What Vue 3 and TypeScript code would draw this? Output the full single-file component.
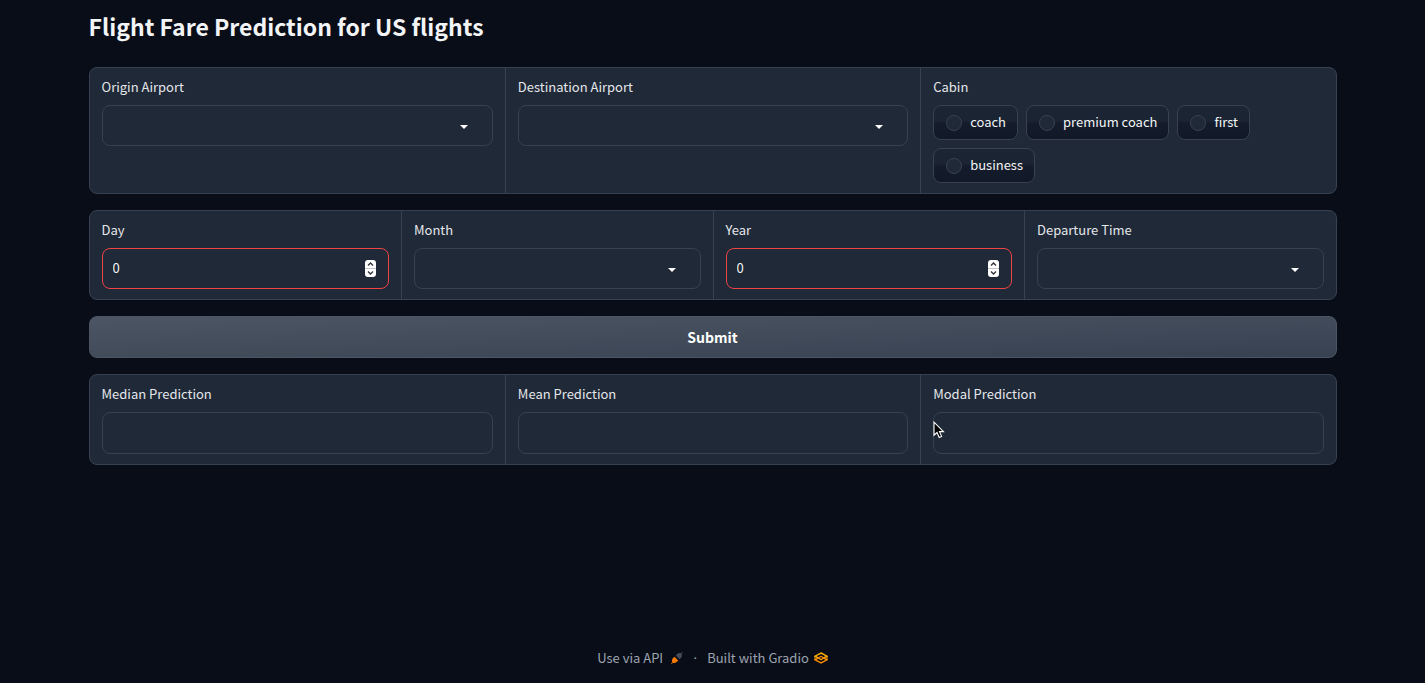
<script setup lang="ts">
import { ref } from 'vue'

const cabins: string[] = ['coach', 'premium coach', 'first', 'business']
const months: string[] = ['January', 'February', 'March', 'April', 'May', 'June', 'July', 'August', 'September', 'October', 'November', 'December']
const airports: string[] = ['ATL', 'BOS', 'CLT', 'DEN', 'DFW', 'JFK', 'LAX', 'MIA', 'ORD', 'SFO']
const times: string[] = ['Morning', 'Afternoon', 'Evening', 'Night']

const origin = ref('')
const destination = ref('')
const cabin = ref('')
const day = ref(0)
const month = ref('')
const year = ref(0)
const departure = ref('')
const median = ref('')
const mean = ref('')
const modal = ref('')
</script>

<template>
  <div class="page">
    <main>
      <h1>Flight Fare Prediction for US flights</h1>
      <form @submit.prevent>
        <div class="panel three">
          <div class="cell">
            <label class="title" for="origin">Origin Airport</label>
            <div class="field">
              <select id="origin" v-model="origin">
                <option v-for="a in airports" :key="a">{{ a }}</option>
              </select>
              <svg class="arrow" viewBox="0 0 8 4" aria-hidden="true"><path d="M0 0h8L4 4z" /></svg>
            </div>
          </div>
          <div class="cell">
            <label class="title" for="destination">Destination Airport</label>
            <div class="field">
              <select id="destination" v-model="destination">
                <option v-for="a in airports" :key="a">{{ a }}</option>
              </select>
              <svg class="arrow" viewBox="0 0 8 4" aria-hidden="true"><path d="M0 0h8L4 4z" /></svg>
            </div>
          </div>
          <fieldset class="cell">
            <legend class="title">Cabin</legend>
            <div class="choices">
              <label v-for="c in cabins" :key="c" class="choice">
                <input v-model="cabin" type="radio" name="cabin" :value="c" />
                <span>{{ c }}</span>
              </label>
            </div>
          </fieldset>
        </div>

        <div class="panel four">
          <div class="cell">
            <label class="title" for="day">Day</label>
            <div class="field">
              <input id="day" v-model="day" class="invalid" type="number" />
              <svg class="spinner" viewBox="0 0 11 17" aria-hidden="true">
                <rect width="11" height="17" rx="3" fill="#fff" />
                <path d="M0 8.5h11" stroke="#c4c6c9" />
                <path d="M3 5.5L5.500 3L8 5.500M3 11.500L5.500 14L8 11.500" fill="none" stroke="#30343b" stroke-width="1.400" />
              </svg>
            </div>
          </div>
          <div class="cell">
            <label class="title" for="month">Month</label>
            <div class="field">
              <select id="month" v-model="month">
                <option v-for="m in months" :key="m">{{ m }}</option>
              </select>
              <svg class="arrow" viewBox="0 0 8 4" aria-hidden="true"><path d="M0 0h8L4 4z" /></svg>
            </div>
          </div>
          <div class="cell">
            <label class="title" for="year">Year</label>
            <div class="field">
              <input id="year" v-model="year" class="invalid" type="number" />
              <svg class="spinner" viewBox="0 0 11 17" aria-hidden="true">
                <rect width="11" height="17" rx="3" fill="#fff" />
                <path d="M0 8.5h11" stroke="#c4c6c9" />
                <path d="M3 5.5L5.500 3L8 5.500M3 11.500L5.500 14L8 11.500" fill="none" stroke="#30343b" stroke-width="1.400" />
              </svg>
            </div>
          </div>
          <div class="cell">
            <label class="title" for="departure">Departure Time</label>
            <div class="field">
              <select id="departure" v-model="departure">
                <option v-for="t in times" :key="t">{{ t }}</option>
              </select>
              <svg class="arrow" viewBox="0 0 8 4" aria-hidden="true"><path d="M0 0h8L4 4z" /></svg>
            </div>
          </div>
        </div>

        <button class="submit" type="submit">Submit</button>

        <div class="panel three results">
          <div class="cell">
            <label class="title" for="median">Median Prediction</label>
            <div class="field"><input id="median" v-model="median" type="text" readonly /></div>
          </div>
          <div class="cell">
            <label class="title" for="mean">Mean Prediction</label>
            <div class="field"><input id="mean" v-model="mean" type="text" readonly /></div>
          </div>
          <div class="cell">
            <label class="title" for="modal">Modal Prediction</label>
            <div class="field">
              <input id="modal" v-model="modal" type="text" readonly />
              <svg class="pointer" viewBox="0 0 12 18" aria-hidden="true">
                <path d="M1 1.200V14.200L4 11.500L6.200 16.500L8.600 15.400L6.500 10.600H10.500Z" fill="#000" stroke="#fff" stroke-width="1.100" />
              </svg>
            </div>
          </div>
        </div>
      </form>
    </main>

    <footer>
      <a href="#api">
        Use via API
        <svg class="rocket" viewBox="0 0 12 12" aria-hidden="true">
          <path d="M0 11.600L1.400 10.200C.6 8.600 1 6.800 2.400 5.800L3.400 4.800L7.200 8.600L6.200 9.600C5 11 3.400 11.200 1.900 10.700L.6 12z" fill="#ff7c00" />
          <path d="M12 .4L10.600 1.800C11.400 3.400 11 5.200 9.600 6.200L8.600 7.200L4.800 3.400L5.800 2.400C7 1 8.600 .8 10.100 1.300L11.400 0z" fill="#414b5a" />
        </svg>
      </a>
      <span class="dot">·</span>
      <a href="#gradio">
        Built with Gradio
        <svg class="logo" viewBox="0 0 14 12" aria-hidden="true">
          <path d="M7 1L13 4.200L7 7.400L1 4.200z" fill="none" stroke="#ffb000" stroke-width="1.500" />
          <path d="M1 7.800L7 4.600L13 7.800L7 11z" fill="none" stroke="#ff8a00" stroke-width="1.500" />
          <path d="M1 4V8M13 4V8" stroke="#ffa000" stroke-width="1" />
          <path d="M5 6L7 5L9 6L7 7z" fill="#4a2c08" />
        </svg>
      </a>
    </footer>
  </div>
</template>

<style>
body {
  margin: 0;
  background: #090d18;
}
</style>

<style scoped>
.page {
  box-sizing: border-box;
  display: flex;
  flex-direction: column;
  min-height: 100vh;
  padding: 8px 16px 14px;
  color: #f3f4f6;
  font-family: "Noto Sans CJK SC", "Noto Sans", sans-serif;
  font-size: 13px;
}
main {
  width: 100%;
  max-width: 1248px;
  margin: 0 auto;
}
h1 {
  margin: 0 0 23px;
  font-size: 23px;
  font-weight: 700;
  line-height: 36px;
}
form {
  display: grid;
  gap: 16px;
}
.panel {
  display: grid;
  overflow: hidden;
  border: 1px solid #374151;
  border-radius: 8px;
  background: #1f2937;
}
.three { grid-template-columns: repeat(3, minmax(0, 1fr)); }
.four { grid-template-columns: repeat(4, minmax(0, 1fr)); }
.cell {
  min-width: 0;
  margin: 0;
  padding: 10px 12px;
  border: 0;
}
.cell + .cell {
  border-left: 1px solid #374151;
}
.title {
  display: block;
  margin-bottom: 10px;
  padding: 0;
  color: #e5e7eb;
  line-height: 17px;
}
legend.title {
  float: left;
  width: 100%;
}
.field {
  position: relative;
}
.field select,
.field input {
  box-sizing: border-box;
  display: block;
  width: 100%;
  height: 41px;
  margin: 0;
  padding: 0 10px 2px;
  border: 1px solid #374151;
  border-radius: 8px;
  outline: none;
  appearance: none;
  background: #1f2937;
  color: #f3f4f6;
  font: inherit;
}
.results .field input { height: 42px; }
.field input[type="number"] { appearance: textfield; }
.field input[type="number"]::-webkit-inner-spin-button { appearance: none; margin: 0; }
.field input.invalid { border-color: #ef4444; }
.arrow {
  position: absolute;
  top: 20px;
  right: 25px;
  width: 8px;
  height: 4px;
  fill: #fff;
  pointer-events: none;
}
.spinner {
  position: absolute;
  top: 12px;
  right: 13px;
  width: 11px;
  height: 17px;
  pointer-events: none;
}
.pointer {
  position: absolute;
  top: 9px;
  left: 0;
  width: 12px;
  height: 18px;
  pointer-events: none;
}
.choices {
  display: flex;
  flex-wrap: wrap;
  gap: 8px;
  clear: both;
}
.choice {
  box-sizing: border-box;
  display: flex;
  align-items: center;
  gap: 8px;
  height: 35px;
  padding: 0 11px 0 12px;
  border: 1px solid #374151;
  border-radius: 8px;
  background: linear-gradient(to bottom, #1c2533, #1b2432 45%, #141c2c 52%, #111827);
  line-height: 19px;
}
.choice span {
  padding-bottom: 2px;
}
.choice input {
  box-sizing: border-box;
  width: 16px;
  height: 16px;
  margin: 0;
  border: 1px solid #374151;
  border-radius: 50%;
  appearance: none;
  background: #1f2937;
}
.choice input:checked {
  border: 5px solid #f97316;
  background: #fff;
}
.submit {
  height: 42px;
  padding: 0;
  border: 1px solid #4b5563;
  border-radius: 8px;
  background: linear-gradient(to bottom right, #4b5563, #374151);
  color: #fff;
  font-family: inherit;
  font-size: 14px;
  font-weight: 700;
}
footer {
  display: flex;
  align-items: center;
  justify-content: center;
  gap: 8px;
  margin-top: auto;
  color: #9ca3af;
  line-height: 22px;
}
footer a {
  display: flex;
  align-items: center;
  gap: 5px;
  color: inherit;
  text-decoration: none;
}
.dot {
  width: 8px;
  font-family: "Noto Sans", sans-serif;
  text-align: center;
}
.rocket {
  width: 12px;
  height: 12px;
  margin-left: 3px;
}
.logo {
  width: 14px;
  height: 12px;
}
</style>
